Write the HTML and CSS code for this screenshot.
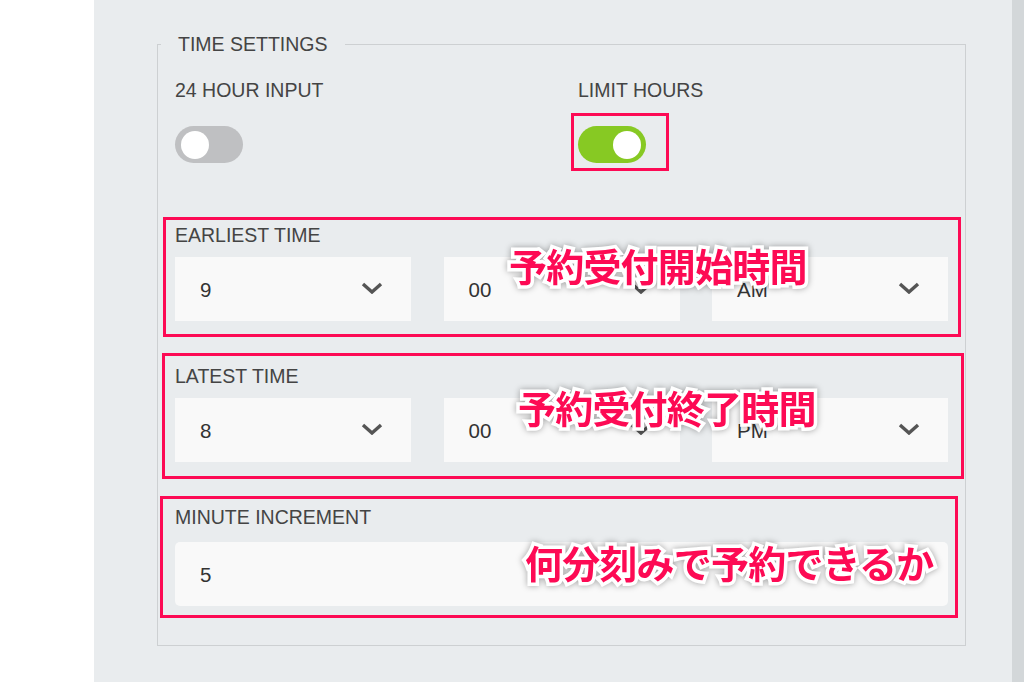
FILE: index.html
```html
<!DOCTYPE html>
<html lang="ja">
<head>
    <meta charset="UTF-8">
    <meta name="viewport" content="width=device-width, initial-scale=1.0">
    <title>Time Settings</title>
    <link rel="stylesheet" href="styles.css">
</head>
<body>
    <div class="page">
        <div class="gutter"></div>

        <main class="panel">
            <fieldset class="settings">
                <legend>TIME SETTINGS</legend>

                <!-- Toggles -->
                <div class="toggles">
                    <div class="toggle-field">
                        <div class="label">24 HOUR INPUT</div>
                        <span class="switch"><span class="knob"></span></span>
                    </div>
                    <div class="toggle-field">
                        <div class="label">LIMIT HOURS</div>
                        <span class="switch on">
                            <span class="knob"></span>
                            <span class="mark mark-switch"></span>
                        </span>
                    </div>
                </div>

                <!-- Earliest time -->
                <div class="group group-earliest">
                    <div class="label">EARLIEST TIME</div>
                    <div class="selects">
                        <div class="select"><span>9</span><svg class="chevron" viewBox="0 0 22 12"><polyline points="2,2 11,10 20,2"/></svg></div>
                        <div class="select"><span>00</span><svg class="chevron" viewBox="0 0 22 12"><polyline points="2,2 11,10 20,2"/></svg></div>
                        <div class="select"><span>AM</span><svg class="chevron" viewBox="0 0 22 12"><polyline points="2,2 11,10 20,2"/></svg></div>
                    </div>
                    <div class="mark"></div>
                    <div class="note">予約受付開始時間</div>
                </div>

                <!-- Latest time -->
                <div class="group group-latest">
                    <div class="label">LATEST TIME</div>
                    <div class="selects">
                        <div class="select"><span>8</span><svg class="chevron" viewBox="0 0 22 12"><polyline points="2,2 11,10 20,2"/></svg></div>
                        <div class="select"><span>00</span><svg class="chevron" viewBox="0 0 22 12"><polyline points="2,2 11,10 20,2"/></svg></div>
                        <div class="select"><span>PM</span><svg class="chevron" viewBox="0 0 22 12"><polyline points="2,2 11,10 20,2"/></svg></div>
                    </div>
                    <div class="mark"></div>
                    <div class="note">予約受付終了時間</div>
                </div>

                <!-- Minute increment -->
                <div class="group group-minute">
                    <div class="label">MINUTE INCREMENT</div>
                    <div class="input">5</div>
                    <div class="mark"></div>
                    <div class="note">何分刻みで予約できるか</div>
                </div>
            </fieldset>
        </main>

        <div class="scrollbar"></div>
    </div>
</body>
</html>
```

FILE: styles.css
```css
/* General Styles */
body {
    margin: 0;
    font-family: "Liberation Sans", Arial, sans-serif;
    color: #444;
    background-color: #fff;
}

.page {
    display: flex;
    height: 682px;
    overflow: hidden;
}

.gutter {
    width: 94px;
    background-color: #fff;
}

.scrollbar {
    width: 12px;
    background-color: #d3d7d9;
}

.panel {
    flex: 1;
    background-color: #e9ecee;
    padding: 33px 46px 0 63px;
}

/* Fieldset */
.settings {
    margin: 0;
    border: 1px solid #cdd0d2;
    padding: 24px 17px 39px 17px;
    min-width: 0;
}

.settings legend {
    margin-left: -14px;
    padding: 0 17px;
    font-size: 19.5px;
    line-height: 22px;
    color: #444;
}

.label {
    font-size: 19.5px;
    line-height: 22px;
    color: #444;
}

/* Toggles */
.toggles {
    display: grid;
    grid-template-columns: 403px 1fr;
}

.toggle-field .switch {
    margin-top: 25px;
}

.switch {
    position: relative;
    display: flex;
    align-items: center;
    width: 68px;
    height: 37px;
    padding: 0 6px;
    box-sizing: border-box;
    border-radius: 19px;
    background-color: #bfc0c2;
}

.switch.on {
    justify-content: flex-end;
    padding: 0 5px;
    background-color: #87c923;
}

.knob {
    width: 28px;
    height: 28px;
    border-radius: 50%;
    background-color: #fff;
}

/* Groups */
.group {
    position: relative;
}

.group-earliest {
    margin-top: 61px;
}

.group-latest,
.group-minute {
    margin-top: 44px;
}

.selects {
    display: grid;
    grid-template-columns: repeat(3, 1fr);
    column-gap: 32.5px;
    margin-top: 11px;
}

.select,
.input {
    display: flex;
    align-items: center;
    justify-content: space-between;
    height: 64px;
    padding: 2px 28px 0 25px;
    box-sizing: border-box;
    background-color: #f9f9f9;
    font-size: 20.5px;
    color: #333;
}

.input {
    margin-top: 14px;
    border-radius: 5px;
}

.chevron {
    width: 22px;
    height: 12px;
    margin-top: -5px;
    fill: none;
    stroke: #555;
    stroke-width: 3.4;
}

/* Annotations */
.mark {
    position: absolute;
    border: 3px solid #fd0a54;
    pointer-events: none;
}

.mark-switch {
    left: -7px;
    top: -13px;
    width: 98px;
    height: 58px;
    box-sizing: border-box;
}

.group-earliest .mark {
    left: -12px;
    right: -13px;
    top: -7px;
    bottom: -16px;
}

.group-latest .mark {
    left: -13px;
    right: -16px;
    top: -12px;
    bottom: -17px;
}

.group-minute .mark {
    left: -15px;
    right: -10px;
    top: -10px;
    bottom: -12px;
}

.note {
    position: absolute;
    font-family: "Noto Sans CJK JP", sans-serif;
    font-weight: 700;
    font-size: 38px;
    line-height: 1;
    letter-spacing: -0.8px;
    color: #fd0a54;
    -webkit-text-stroke: 7px #fff;
    paint-order: stroke fill;
    filter: drop-shadow(0 0 3px rgba(0, 0, 0, 0.35));
    white-space: nowrap;
}

.group-earliest .note {
    left: 334px;
    top: 22px;
}

.group-latest .note {
    left: 343px;
    top: 23px;
}

.group-minute .note {
    left: 350px;
    top: 37px;
}
```
